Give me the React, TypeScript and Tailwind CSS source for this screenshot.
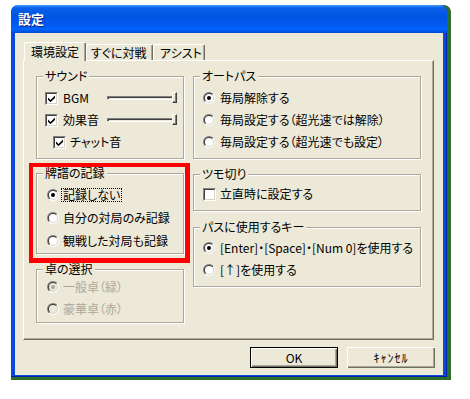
import React from "react";

const Check = ({ checked }: { checked?: boolean }) => (
  <span className="flex w-[13px] h-[13px] shrink-0 border border-t-[#808080] border-l-[#808080] border-r-white border-b-white">
    <span className="flex flex-1 items-center justify-center border border-t-[#404040] border-l-[#404040] border-r-[#d4d0c8] border-b-[#d4d0c8] bg-white">
      {checked && (
        <svg width="7" height="7" viewBox="0 0 7 7">
          <path d="M0 2.5 L2.5 5 L7 0.5 V3 L2.5 7.2 L0 4.7 Z" fill="#000" />
        </svg>
      )}
    </span>
  </span>
);

const Radio = ({ checked, disabled }: { checked?: boolean; disabled?: boolean }) => (
  <span className="flex w-[12px] h-[12px] shrink-0 rounded-full p-[1px] bg-[linear-gradient(135deg,#808080_50%,#ffffff_50%)]">
    <span className="flex flex-1 rounded-full p-[1px] bg-[linear-gradient(135deg,#404040_50%,#d4d0c8_50%)]">
      <span
        className={`flex flex-1 items-center justify-center rounded-full ${
          disabled ? "bg-[#ece9d8]" : "bg-white"
        }`}
      >
        {checked && (
          <span className={`w-[4px] h-[4px] rounded-full ${disabled ? "bg-[#aca899]" : "bg-black"}`} />
        )}
      </span>
    </span>
  </span>
);

const Slider = () => (
  <div className="relative flex items-center w-[70px] h-[12px]">
    <div className="w-full h-[4px] border border-t-[#808080] border-l-[#808080] border-r-white border-b-white bg-[#ece9d8] shadow-[inset_1px_1px_0_#404040]" />
    <div className="absolute right-0 top-0 w-[5px] h-[11px] bg-[#ece9d8] border border-t-white border-l-white border-r-[#404040] border-b-[#404040] shadow-[inset_-1px_-1px_0_#808080]" />
  </div>
);

const Group = ({
  label,
  className = "",
  children,
}: {
  label: string;
  className?: string;
  children: React.ReactNode;
}) => (
  <div className={`border border-[#aca899] shadow-[inset_1px_1px_0_#ffffff,1px_1px_0_#ffffff] ${className}`}>
    <div className="-mt-[8px] ml-[6px] px-[2px] w-fit bg-[#ece9d8] leading-[14px] text-black">{label}</div>
    {children}
  </div>
);

const Tab = ({
  active,
  w,
  pl,
  children,
}: {
  active?: boolean;
  w: string;
  pl: string;
  children: React.ReactNode;
}) => (
  <div
    className={`${w} ${pl} flex items-center bg-[#ece9d8] border-t border-l border-r border-t-white border-l-white border-r-[#716f64] rounded-t-[2px] shadow-[inset_-1px_0_0_#aca899] ${
      active ? "h-[19px] -mb-[1px] pb-[1px]" : "h-[16px]"
    }`}
  >
    {children}
  </div>
);

export default function App() {
  return (
    <div className="w-[470px] h-[399px] bg-white pt-[5px] pl-[11px] text-[12px] leading-[14px] text-black font-['Noto_Sans_CJK_JP','Noto_Sans',sans-serif] [font-feature-settings:'palt']">
      <div className="flex flex-col w-[436px] h-[372px] rounded-t-[7px] bg-[#0b4ad8] shadow-[4px_0_0_#2f6f2a,0_3px_0_#2f6f2a,4px_3px_0_#2f6f2a,inset_-1px_-1px_0_#0020a8]">
        {/* title bar */}
        <div className="flex items-center h-[28px] pl-[7px] rounded-t-[7px] bg-[linear-gradient(180deg,#4a9cff_0%,#0a60ea_10%,#0054e3_40%,#0058ee_70%,#0064fb_88%,#0048d0_100%)]">
          <span className="text-white font-bold text-[13px] leading-[16px] [text-shadow:1px_1px_0_#0a1e8a]">設定</span>
        </div>
        {/* client */}
        <div className="flex flex-col flex-1 mx-[4px] mb-[2px] bg-[#ece9d8]">
          <div className="flex flex-col mt-[9px] ml-[8px] w-[411px]">
            <div className="relative z-10 flex items-end h-[18px] pl-[1px]">
              <Tab active w="w-[62px]" pl="pl-[6px]">
                環境設定
              </Tab>
              <Tab w="w-[67px]" pl="pl-[4px]">
                すぐに対戦
              </Tab>
              <Tab w="w-[52px]" pl="pl-[6px]">
                アシスト
              </Tab>
            </div>
            <div className="flex h-[280px] pt-[15px] pl-[12px] gap-[9px] border border-t-white border-l-white border-r-[#716f64] border-b-[#716f64] shadow-[inset_-1px_-1px_0_#aca899]">
              {/* left column */}
              <div className="flex flex-col w-[148px]">
                <Group label="サウンド">
                  <div className="flex flex-col pt-[4px] pb-[5px] pl-[8px]">
                    <div className="flex items-center h-[22px]">
                      <Check checked />
                      <span className="ml-[5px] w-[44px]">BGM</span>
                      <Slider />
                    </div>
                    <div className="flex items-center h-[22px]">
                      <Check checked />
                      <span className="ml-[5px] w-[44px]">効果音</span>
                      <Slider />
                    </div>
                    <div className="flex items-center h-[22px] pl-[8px]">
                      <Check checked />
                      <span className="ml-[4px]">チャット音</span>
                    </div>
                  </div>
                </Group>

                <div className="relative mt-[14px]">
                  <Group label="牌譜の記録">
                    <div className="flex flex-col pt-[3px] pb-[1px] pl-[10px]">
                      <div className="flex items-center h-[23px]">
                        <Radio checked />
                        <span className="ml-[2px] border border-dotted border-black px-[1px] leading-[12px]">記録しない</span>
                      </div>
                      <div className="flex items-center h-[23px]">
                        <Radio />
                        <span className="ml-[4px]">自分の対局のみ記録</span>
                      </div>
                      <div className="flex items-center h-[23px]">
                        <Radio />
                        <span className="ml-[4px]">観戦した対局も記録</span>
                      </div>
                    </div>
                  </Group>
                  <div className="absolute -left-[7px] -right-[6px] -top-[10px] -bottom-[9px] border-t-4 border-l-4 border-r-[5px] border-b-[5px] border-[#ff0000] pointer-events-none" />
                </div>

                <Group label="卓の選択" className="mt-[15px]">
                  <div className="flex flex-col pb-[2px] pl-[10px] text-[#aca899]">
                    <div className="flex items-center h-[22px]">
                      <Radio checked disabled />
                      <span className="ml-[4px]">一般卓（緑）</span>
                    </div>
                    <div className="flex items-center h-[22px]">
                      <Radio disabled />
                      <span className="ml-[4px]">豪華卓（赤）</span>
                    </div>
                  </div>
                </Group>
              </div>

              {/* right column */}
              <div className="flex flex-col w-[228px]">
                <Group label="オートパス">
                  <div className="flex flex-col pt-[4px] pb-[5px] pl-[9px]">
                    <div className="flex items-center h-[22px]">
                      <Radio checked />
                      <span className="ml-[5px]">毎局解除する</span>
                    </div>
                    <div className="flex items-center h-[22px]">
                      <Radio />
                      <span className="ml-[5px]">毎局設定する（超光速では解除）</span>
                    </div>
                    <div className="flex items-center h-[22px]">
                      <Radio />
                      <span className="ml-[5px]">毎局設定する（超光速でも設定）</span>
                    </div>
                  </div>
                </Group>

                <Group label="ツモ切り" className="mt-[15px]">
                  <div className="flex flex-col pt-[2px] pb-[5px] pl-[9px]">
                    <div className="flex items-center h-[22px]">
                      <Check />
                      <span className="ml-[4px]">立直時に設定する</span>
                    </div>
                  </div>
                </Group>

                <Group label="パスに使用するキー" className="mt-[16px]">
                  <div className="flex flex-col pt-[3px] pb-[5px] pl-[9px]">
                    <div className="flex items-center h-[22px]">
                      <Radio checked />
                      <span className="ml-[5px] whitespace-nowrap">[Enter]・[Space]・[Num 0]を使用する</span>
                    </div>
                    <div className="flex items-center h-[22px]">
                      <Radio />
                      <span className="ml-[5px]">[↑]を使用する</span>
                    </div>
                  </div>
                </Group>
              </div>
            </div>
          </div>

          {/* buttons */}
          <div className="flex justify-end gap-[9px] mt-[7px] mr-[8px]">
            <button className="flex items-center justify-center w-[88px] h-[21px] border border-black bg-[#ece9d8] shadow-[inset_1px_1px_0_#ffffff,inset_-1px_-1px_0_#716f64,inset_-2px_-2px_0_#aca899]">
              OK
            </button>
            <button className="flex items-center justify-center w-[88px] h-[21px] bg-[#ece9d8] shadow-[inset_1px_1px_0_#ffffff,inset_-1px_-1px_0_#716f64,inset_-2px_-2px_0_#aca899] [font-feature-settings:normal] tracking-[1px]">
              ｷｬﾝｾﾙ
            </button>
          </div>
        </div>
      </div>
    </div>
  );
}
